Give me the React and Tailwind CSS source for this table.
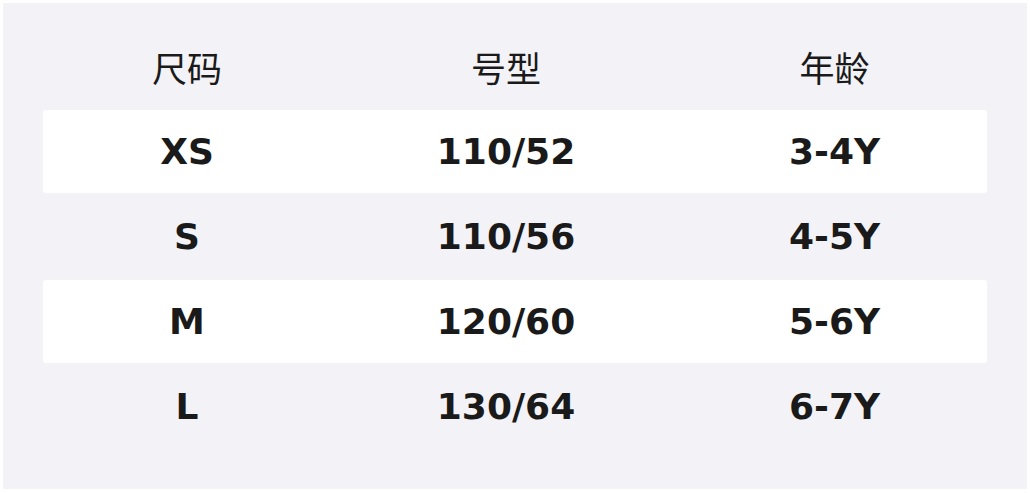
import React from "react";

const rows = [
  { size: "XS", type: "110/52", age: "3-4Y" },
  { size: "S", type: "110/56", age: "4-5Y" },
  { size: "M", type: "120/60", age: "5-6Y" },
  { size: "L", type: "130/64", age: "6-7Y" },
];

const cols = "grid grid-cols-[288px_350px_307px]";

export default function App() {
  return (
    <div className="h-[493px] w-[1030px] bg-white p-[3px] pb-[4px]">
      <div className="h-full bg-[#f3f3f7] px-[40px] pt-[21px] text-[#1a1a1a]">
        {/* header */}
        <div className={`${cols} h-[85px] items-center text-center text-[35px] font-['Noto_Sans_CJK_SC',sans-serif] leading-none`}>
          <div>尺码</div>
          <div>号型</div>
          <div>年龄</div>
        </div>

        {/* rows */}
        {rows.map((r, i) => (
          <div key={r.size} className="h-[85px] py-[1px]">
            <div
              className={`${cols} h-full items-center rounded-[3px] text-center text-[36px] font-bold leading-none font-['DejaVu_Sans',sans-serif] ${
                i % 2 === 0 ? "bg-white" : "bg-transparent"
              }`}
            >
              <div>{r.size}</div>
              <div>{r.type}</div>
              <div>{r.age}</div>
            </div>
          </div>
        ))}
      </div>
    </div>
  );
}
